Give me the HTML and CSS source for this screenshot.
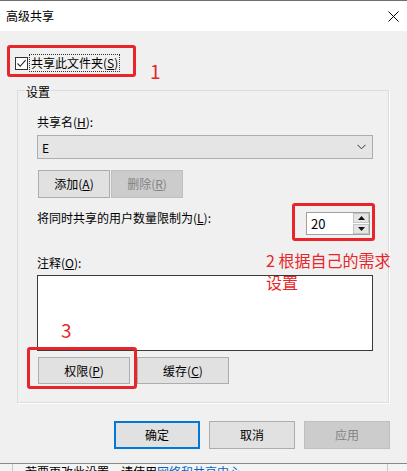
FILE: index.html
```html
<!DOCTYPE html>
<html lang="zh-CN">
<head>
<meta charset="utf-8">
<title>高级共享</title>
<link rel="stylesheet" href="styles.css">
</head>
<body>
<div class="screen">
  <div class="dialog">
    <div class="titlebar">
      <span class="title">高级共享</span>
      <svg class="close" width="11" height="11" viewBox="0 0 11 11"><path d="M0.5 0.5 L10.5 10.5 M10.5 0.5 L0.5 10.5" stroke="#000" stroke-width="1" fill="none"/></svg>
    </div>
    <div class="body">
      <div class="share-row">
        <span class="checkbox">
          <svg width="11" height="11" viewBox="0 0 11 11"><path d="M1.5 5.5 L4.2 8.3 L9.6 2.2" stroke="#222" stroke-width="1.1" fill="none"/></svg>
        </span>
        <span class="share-label">共享此文件夹(<u>S</u>)</span>
      </div>

      <div class="group">
        <span class="legend">设置</span>
        <div class="lbl">共享名(<u>H</u>):</div>
        <div class="select">
          <span>E</span>
          <svg width="9" height="6" viewBox="0 0 9 6"><path d="M0.5 0.8 L4.5 4.8 L8.5 0.8" stroke="#333" stroke-width="1" fill="none"/></svg>
        </div>
        <div class="btn-row first">
          <button class="btn small">添加(<u>A</u>)</button>
          <button class="btn small disabled">删除(<u>R</u>)</button>
        </div>
        <div class="limit-row">
          <span class="lbl">将同时共享的用户数量限制为(<u>L</u>):</span>
          <div class="spin">
            <span class="spin-val">20</span>
            <span class="spin-btns">
              <span class="spin-btn"><svg width="7" height="4" viewBox="0 0 7 4"><path d="M0 4 L3.5 0 L7 4 Z" fill="#111"/></svg></span>
              <span class="spin-btn"><svg width="7" height="4" viewBox="0 0 7 4"><path d="M0 0 L3.5 4 L7 0 Z" fill="#111"/></svg></span>
            </span>
          </div>
        </div>
        <div class="lbl note-lbl">注释(<u>O</u>):</div>
        <div class="textarea"></div>
        <div class="btn-row second">
          <button class="btn wide">权限(<u>P</u>)</button>
          <button class="btn wide">缓存(<u>C</u>)</button>
        </div>
      </div>

      <div class="footer">
        <button class="btn dlg default">确定</button>
        <button class="btn dlg">取消</button>
        <button class="btn dlg disabled">应用</button>
      </div>
    </div>
  </div>
  <div class="below">
    <div class="below-inner">若要更改此设置，请使用<span class="link">网络和共享中心</span></div>
  </div>

  <div class="mark mark1"></div>
  <div class="mark mark2"></div>
  <div class="mark mark3"></div>
  <div class="note n1">1</div>
  <div class="note n2">2 根据自己的需求<br>设置</div>
  <div class="note n3">3</div>
</div>
</body>
</html>
```

FILE: styles.css
```css
* { box-sizing: border-box; }
html, body { margin: 0; padding: 0; background: #f0f0f0; }
.screen {
  position: relative;
  width: 407px;
  height: 471px;
  overflow: hidden;
  font-family: "Noto Sans CJK SC", "Noto Sans", sans-serif;
  font-size: 12px;
  color: #000;
  background: #f0f0f0;
}
u { text-decoration: underline; text-underline-offset: 1px; }
.dialog {
  border-top: 1px solid #6f6f6f;
  border-bottom: 1px solid #8a8a8a;
}
.titlebar {
  height: 30px;
  background: #fff;
  display: flex;
  align-items: center;
  justify-content: space-between;
  padding: 0 8px 0 6px;
}
.title { line-height: 16px; }
.body {
  background: #f0f0f0;
  height: 432px;
  padding-top: 23px;
}
.share-row {
  display: flex;
  align-items: center;
  height: 18px;
  margin-left: 15px;
}
.checkbox {
  width: 13px;
  height: 13px;
  border: 1px solid #333;
  background: #fff;
  display: flex;
  align-items: center;
  justify-content: center;
}
.share-label {
  margin-left: 2px;
  padding: 0 1px;
  line-height: 16px;
  outline: 1px dotted #333;
}
.group {
  position: relative;
  margin: 18px 18px 0 17px;
  border: 1px solid #dcdcdc;
  box-shadow: 1px 1px 0 #fff;
  padding: 23px 15px 18px 19px;
}
.legend {
  position: absolute;
  top: -7px;
  left: 7px;
  padding: 0 1px;
  line-height: 16px;
  background: #f0f0f0;
}
.lbl { line-height: 16px; }
.select {
  margin-top: 5px;
  height: 24px;
  border: 1px solid #adadad;
  background: #e5e5e5;
  display: flex;
  align-items: center;
  justify-content: space-between;
  padding: 0 6px 0 4px;
}
.btn-row { display: flex; margin-left: 1px; }
.btn-row.first { margin-top: 11px; gap: 1px; }
.btn-row.second { margin-top: 6px; gap: 7px; }
.btn {
  font-family: inherit;
  font-size: 12px;
  color: #000;
  background: #e1e1e1;
  border: 1px solid #adadad;
  padding: 0;
  margin: 0;
  line-height: 16px;
}
.btn.small { width: 72px; height: 28px; }
.btn.wide { width: 92px; height: 27px; }
.btn.disabled {
  background: #cccccc;
  border-color: #bfbfbf;
  color: #838383;
}
.limit-row {
  margin-top: 12px;
  display: flex;
  justify-content: space-between;
  align-items: flex-start;
}
.spin {
  margin-top: 2px;
  margin-right: 3px;
  width: 64px;
  height: 23px;
  border: 1px solid #a0a0a0;
  background: #fff;
  display: flex;
  justify-content: space-between;
}
.spin-val { line-height: 21px; padding-left: 4px; font-size: 13px; }
.spin-btns {
  width: 16px;
  display: flex;
  flex-direction: column;
  gap: 1px;
  background: #fff;
}
.spin-btn {
  flex: 1;
  background: #e5e5e5;
  border: 1px solid #c4c4c4;
  display: flex;
  align-items: center;
  justify-content: center;
}
.note-lbl { margin-top: 20px; }
.textarea {
  margin-top: 4px;
  height: 76px;
  background: #fff;
  border: 1px solid #3a3a3a;
}
.footer {
  margin-top: 18px;
  display: flex;
  justify-content: flex-end;
  gap: 9px;
  padding-right: 17px;
}
.btn.dlg { width: 86px; height: 28px; }
.btn.default { border: 2px solid #0078d7; }
.below {
  height: 7px;
  background: #f4f4f4;
  padding: 0 19px 0 12px;
}
.below-inner {
  height: 7px;
  border-left: 1px solid #c8c8c8;
  border-right: 1px solid #c8c8c8;
  padding-left: 12px;
  line-height: 16px;
  margin-top: 0;
  white-space: nowrap;
  overflow: hidden;
}
.below-inner { padding-top: 0; }
.link { color: #0066cc; }

.mark {
  position: absolute;
  border: 3px solid #e8252a;
  border-radius: 3px;
}
.mark1 { left: 7px; top: 45px; width: 129px; height: 32px; }
.mark2 { left: 292px; top: 203px; width: 83px; height: 38px; }
.mark3 { left: 27px; top: 347px; width: 110px; height: 42px; }
.note {
  position: absolute;
  color: #e8252a;
  font-family: "Noto Sans CJK SC", "Noto Sans", sans-serif;
}
.n1 { left: 150px; top: 59px; font-size: 19px; line-height: 24px; }
.n2 { left: 266px; top: 249px; font-size: 16px; line-height: 22px; }
.n3 { left: 61px; top: 318px; font-size: 19px; line-height: 24px; }
```
